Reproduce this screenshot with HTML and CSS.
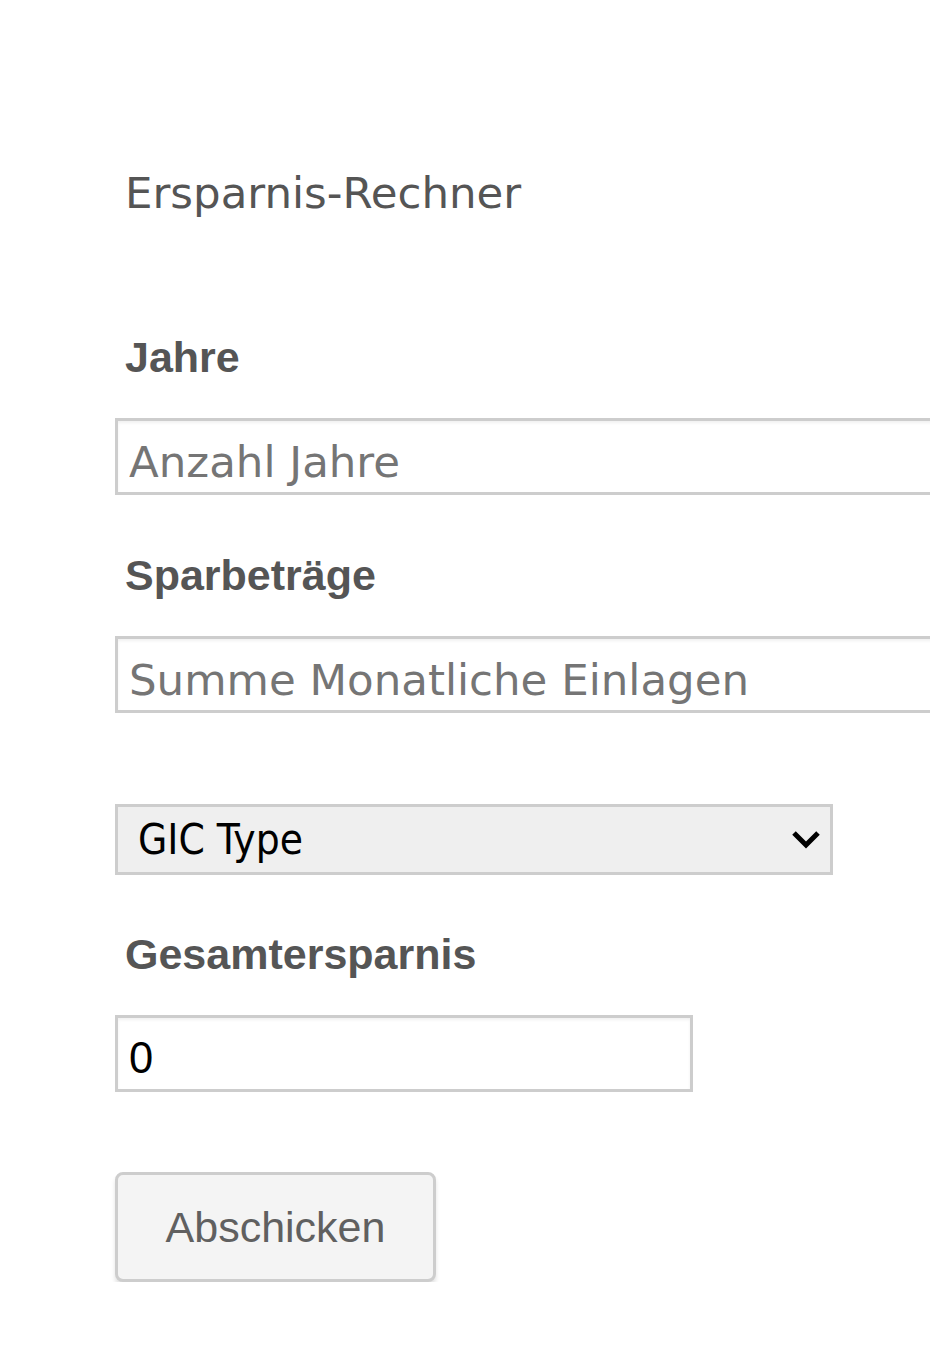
FILE: index.html
```html
<!DOCTYPE html>
<html lang="de">
<head>
  <meta charset="UTF-8" />
  <meta name="viewport" content="width=device-width, initial-scale=1.0" />
  <title>Ersparnis-Rechner</title>
  <link rel="stylesheet" href="styles.css">
</head>
<body>

<div id="calculator">
  <h1 class="calc-title">Ersparnis-Rechner</h1>

  <form id="savings-form" onsubmit="return false;">
    <label class="field-label" for="years">Jahre</label>
    <input class="text-field wide" id="years" type="text" placeholder="Anzahl Jahre" />

    <label class="field-label" for="deposit">Sparbeträge</label>
    <input class="text-field wide" id="deposit" type="text" placeholder="Summe Monatliche Einlagen" />

    <div class="select-box">
      <select id="gic-type">
        <option>GIC Type</option>
      </select>
      <svg class="chevron" width="30" height="22" viewBox="0 0 30 22">
        <polyline points="3,4 15,16 27,4" fill="none" stroke="#000" stroke-width="5" />
      </svg>
    </div>

    <label class="field-label" for="total">Gesamtersparnis</label>
    <input class="text-field result" id="total" type="text" value="0" readonly />

    <button class="submit-btn" type="submit">Abschicken</button>
  </form>
</div>

</body>
</html>
```

FILE: styles.css
```css
    body {
      margin: 0;
      padding: 0;
      background-color: white;
      color: #555;
      overflow-x: hidden;
    }

    #calculator {
      padding: 168px 0 0 115px;
      overflow: hidden;
    }

    .calc-title {
      font-family: 'DejaVu Sans', Verdana, sans-serif;
      font-weight: normal;
      font-size: 43.5px;
      line-height: 51px;
      color: #555;
      margin: 0 0 114px 10px;
    }

    #savings-form {
      display: flex;
      flex-direction: column;
      align-items: flex-start;
    }

    .field-label {
      font-family: 'Liberation Sans', Arial, sans-serif;
      font-weight: bold;
      font-size: 43px;
      line-height: 49px;
      color: #555;
      margin-left: 10px;
      margin-bottom: 36px;
    }

    .text-field {
      box-sizing: border-box;
      height: 77px;
      border: 3px solid #cdcdcd;
      box-shadow: inset 0 2px 3px rgba(0, 0, 0, 0.06);
      background: white;
      padding: 15px 11px 5px;
      font-family: 'DejaVu Sans', Verdana, sans-serif;
      font-size: 43.5px;
      line-height: 51px;
      color: #000;
      outline: none;
    }

    .text-field::placeholder {
      color: #757575;
    }

    .text-field.wide {
      width: 900px;
      margin-bottom: 56px;
    }

    #deposit.wide {
      margin-bottom: 91px;
    }

    .text-field.result {
      width: 578px;
      font-family: 'Liberation Sans', Arial, sans-serif;
      margin-bottom: 80px;
    }

    .select-box {
      position: relative;
      margin-bottom: 55px;
    }

    .select-box select {
      box-sizing: border-box;
      width: 718px;
      height: 71px;
      border: 3px solid #cdcdcd;
      border-radius: 0;
      background: #efefef;
      appearance: none;
      -webkit-appearance: none;
      padding: 0 20px;
      font-family: 'DejaVu Sans Condensed', 'DejaVu Sans', sans-serif;
      font-size: 42px;
      color: #000;
      outline: none;
    }

    .chevron {
      position: absolute;
      right: 12px;
      top: 25px;
      pointer-events: none;
    }

    .submit-btn {
      box-sizing: border-box;
      width: 321px;
      height: 110px;
      border: 3px solid #cdcdcd;
      border-radius: 8px;
      background: #f4f4f4;
      box-shadow: 0 4px 4px rgba(0, 0, 0, 0.12);
      font-family: 'Liberation Sans', Arial, sans-serif;
      font-size: 43px;
      color: #606060;
      cursor: pointer;
    }
```
